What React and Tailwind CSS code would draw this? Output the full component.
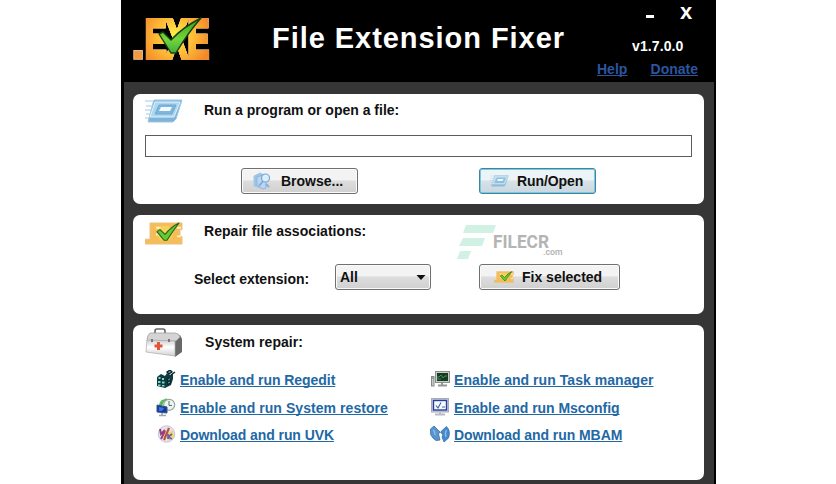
import React from "react";

function Check(props) {
  return (
    <g {...props}>
      <path d="M26 34 L30 32 L38 40 Q50 27 68 18 Q54 34 43 53 L38 53 Z" fill="url(#checkFill)" stroke="#173f0b" strokeWidth="1.4" strokeLinejoin="round" />
    </g>
  );
}

function ExeLogo() {
  return (
    <svg className="block h-[46px] w-[78px] overflow-visible" viewBox="0 0 78 46">
      <defs>
        <radialGradient id="exeFill" gradientUnits="userSpaceOnUse" cx="42" cy="21" r="36">
          <stop offset="0" stopColor="#fff04a" />
          <stop offset="0.5" stopColor="#ffbd35" />
          <stop offset="1" stopColor="#f28a2d" />
        </radialGradient>
        <linearGradient id="checkFill" x1="0" y1="0" x2="0" y2="1">
          <stop offset="0" stopColor="#399a20" />
          <stop offset="0.6" stopColor="#75d53b" />
          <stop offset="1" stopColor="#3fae3d" />
        </linearGradient>
      </defs>
      <rect x="0.8" y="35.5" width="8.6" height="8.8" fill="#f39a3a" stroke="#e9bb90" />
      <text className="[filter:drop-shadow(0_0_0.5px_#f3d3b0)_drop-shadow(0_0_0.3px_#edbd8d)]" x="12" y="42.500" textLength="64" lengthAdjust="spacingAndGlyphs" fontFamily="Liberation Sans, sans-serif" fontWeight="700" fontSize="56" fill="url(#exeFill)" stroke="url(#exeFill)" strokeWidth="4.200">EXE</text>
      <Check transform="translate(0 -15)" />
    </svg>
  );
}

function ExeIcon({ className }) {
  return (
    <svg className={className} viewBox="0 0 38 24" preserveAspectRatio="none">
      <path d="M5 1H37V8H35V15H37V23H0V18H5Z" fill="#f4bd57" stroke="#e8c284" />
      <path d="M11 6H16M11 13H16M32 6H36M32 15H36" stroke="#fff0c9" strokeWidth="2" />
      <circle cx="20" cy="12" r="8" fill="#f7d957" opacity=".7" />
      <path d="M12 10L15 8L20 13Q26 5 34 1Q28 9 22 19L19 19Z" fill="#65c934" stroke="#24631a" strokeWidth="1.1" strokeLinejoin="round" />
    </svg>
  );
}

function RunIcon({ className }) {
  return (
    <svg className={className} viewBox="0 0 38 24" preserveAspectRatio="none">
      <path d="M9 1H37L31 20L28 23H3L8 4Z" fill="#7eb4d8" stroke="#9dc9e3" />
      <path d="M10 3H35L29 18H5Z" fill="#add6ef" stroke="#e1f2fb" />
      <path d="M14 6H31L27 15H10Z" fill="#7fb6de" stroke="#6fa9d2" />
      <path d="M16 8H27L25 12H14Z" fill="#f2faff" />
      <path d="M0 2H8M1 7H7M0 11H6M1 15H5M0 19H4" stroke="#a5c9de" strokeWidth="1" />
    </svg>
  );
}

function BrowseIcon() {
  return (
    <svg className="h-[18px] w-[18px]" viewBox="0 0 18 18">
      <path d="M1 4L7 1L11 3V14L8 16L1 14Z" fill="#9bc3e9" stroke="#a9c8e4" />
      <path d="M4 5L10 3L13 5V16L10 17L4 14Z" fill="#bad5ef" stroke="#8eb7df" />
      <circle cx="12.5" cy="6" r="4" fill="#d9eeff" stroke="#7aa5d5" strokeWidth="1.2" />
      <path d="M10 9L6 14" stroke="#80acd9" strokeWidth="2" />
      <path d="M13 12L16 15" stroke="#87afd8" strokeWidth="2" />
    </svg>
  );
}

function KitIcon() {
  return (
    <svg className="h-[30px] w-[38px]" viewBox="0 0 38 30">
      <defs>
        <linearGradient id="kit" x1="0" y1="0" x2="0" y2="1">
          <stop stopColor="#cfcfcf" /><stop offset=".45" stopColor="#fff" /><stop offset="1" stopColor="#cfcfcf" />
        </linearGradient>
      </defs>
      <path d="M10 6V3Q10 1 12 1H18Q20 1 20 3V6" fill="none" stroke="#686868" strokeWidth="1.6" />
      <path d="M28 8L35 7L37 11V24L30 29Z" fill="#686868" />
      <path d="M5 5H30Q34 5 35 9L31 13H2Q2 7 5 5Z" fill="#d4d4d4" stroke="#999" strokeWidth=".7" />
      <path d="M2 12L30 13V28L1 24Z" fill="url(#kit)" stroke="#aaa" strokeWidth=".7" />
      <path d="M7 11V14M24 11V14" stroke="#777" strokeWidth="2" />
      <path d="M13.5 14V22M9.5 18H17.5" stroke="#e0563b" strokeWidth="3" />
    </svg>
  );
}

function RegeditIcon() {
  return (
    <svg className="h-[19px] w-[20px]" viewBox="0 0 20 19">
      <path d="M1 7L5 4L9 6L11 3L14 5L17 4V9L15 15L9 18L1 16Z" fill="#103b3e" />
      <path d="M2.500 7h2v2h-2zM6 8h2v2H6zM2 11h2.500v2H2zM6 11.500h2.500v2H6zM2 14.500h2.500v1.500H2zM6 15h2.500v1.500H6z" fill="#78d8d2" />
      <path d="M11 2L14 0L16 2L13 4ZM15 5L19 2M12 8V15M14 9L14 14" fill="#4fa9aa" stroke="#071f25" strokeWidth="1.3" />
      <path d="M12 10L14 9M12 13L14 12" stroke="#4fb5b8" />
    </svg>
  );
}

function RestoreIcon() {
  return (
    <svg className="h-[19px] w-[20px]" viewBox="0 0 20 19">
      <path d="M3 7Q4 1 10 1L9 0L14 2L11 5L10 3Q7 3 6 9Z" fill="#55b85a" />
      <circle cx="13.2" cy="6.8" r="5.5" fill="#edf3ee" stroke="#94a69e" strokeWidth="1.2" />
      <path d="M13 3V7.500H16" fill="none" stroke="#536f77" />
      <path d="M1 7L11 9V15L1 14Z" fill="#1739a7" stroke="#3b527e" />
      <path d="M3 9L8 10L6 13H3Z" fill="#3878e2" />
      <path d="M6 15V17M3 17.5H10" stroke="#9ba6ae" strokeWidth="1.7" />
    </svg>
  );
}

function UvkIcon() {
  return (
    <svg className="h-[19px] w-[20px]" viewBox="0 0 20 19">
      <circle cx="10.5" cy="9" r="8.200" fill="#e5e2f0" stroke="#c8c4d9" />
      <path d="M12 8L17 5L18 12L12 16Z" fill="#efd477" />
      <path d="M4 4L5 9L9 5M9 6L5 14" fill="none" stroke="#96417d" strokeWidth="2" />
      <path d="M13 3L8 15" stroke="#c2532a" strokeWidth="2.2" />
      <path d="M12 9V14M12 12L16 9M12 12L16 14" fill="none" stroke="#6265a2" strokeWidth="1.7" />
    </svg>
  );
}

function TaskIcon() {
  return (
    <svg className="h-[19px] w-[20px]" viewBox="0 0 20 19">
      <rect x="1.500" y="6.500" width="2.500" height="9.500" fill="#c7ccca" stroke="#838a87" />
      <path d="M2 8H4" stroke="#777" />
      <rect x="5.5" y="1.500" width="14" height="11" fill="#c9cec8" stroke="#899089" />
      <rect x="7" y="3" width="11" height="8" fill="#153b24" />
      <path d="M7 7H9L11 5L13 8L15 6H17M7 9H11" fill="none" stroke="#4b8c51" />
      <path d="M12 13V15M8 15.5H17" stroke="#929896" strokeWidth="2" />
    </svg>
  );
}

function ConfigIcon() {
  return (
    <svg className="h-[19px] w-[20px]" viewBox="0 0 20 19">
      <rect x="1.5" y="0.500" width="17" height="13.500" fill="#c9ccd7" stroke="#a5aabd" />
      <rect x="3.5" y="2.500" width="13" height="9.5" fill="#f7faff" stroke="#293e99" strokeWidth="1.4" />
      <path d="M6 7.500L8 10L11 4.500M12 9H15" fill="none" stroke="#3e68ae" strokeWidth="1.2" />
      <path d="M10 14.500V17M5 16.500H15" stroke="#b8bbc4" strokeWidth="2" />
    </svg>
  );
}

function MbamIcon() {
  return (
    <svg className="h-[19px] w-[20px]" viewBox="0 0 20 19">
      <path d="M4 1L10 7L8.500 9L10 15L6 15.500Q-1 11 0.500 4Z" fill="#5794d0" stroke="#376f9f" strokeWidth=".8" />
      <path d="M16.500 1.500Q21 6 18.500 13L14 17L12 12L13 10L10.500 7Z" fill="#438ad0" stroke="#376f9f" strokeWidth=".8" />
      <path d="M3 5Q5 6 5 10M16.500 5Q14.500 8 16 12" fill="none" stroke="#8dc1ea" strokeWidth="1.200" />
    </svg>
  );
}

function FileCr() {
  return (
    <svg className="h-[36px] w-[108px]" viewBox="0 0 108 36">
      <path d="M9 0H39L36 8H6ZM6 13H28L25 21H2ZM3 26H14L11 34H0Z" fill="#d0f1e4" />
      <text x="36" y="23" textLength="56" lengthAdjust="spacingAndGlyphs" fontFamily="Roboto, sans-serif" fontWeight="700" fontSize="18" fill="#b4b4b4">FILECR</text>
      <text x="86" y="30" textLength="19.500" lengthAdjust="spacingAndGlyphs" fontFamily="Roboto, sans-serif" fontWeight="600" fontSize="8.500" fill="#b4b4b4">.com</text>
    </svg>
  );
}

const leftLinks = [
  [RegeditIcon, "Enable and run Regedit", "tracking-[-0.05px]"],
  [RestoreIcon, "Enable and run System restore", "tracking-[0.06px]"],
  [UvkIcon, "Download and run UVK", "tracking-[-0.08px]"],
];
const rightLinks = [
  [TaskIcon, "Enable and run Task manager", "tracking-[0.05px]"],
  [ConfigIcon, "Enable and run Msconfig", "tracking-[-0.04px]"],
  [MbamIcon, "Download and run MBAM", "tracking-[-0.06px]"],
];

function Links({ items }) {
  return (
    <ul className="flex flex-col">
      {items.map(([Icon, label, spacing]) => (
        <li key={label} className="flex h-[27.5px] items-center">
          <Icon />
          <a className={"ml-1 whitespace-nowrap pt-px text-[#2268a5] underline decoration-1 underline-offset-[1px] [text-decoration-skip-ink:none] " + spacing}>{label}</a>
        </li>
      ))}
    </ul>
  );
}

const button = "flex h-[26px] items-center rounded-[3px] border border-[#707070] bg-linear-to-b from-[#f3f3f3] from-45% via-[#dddddd] via-50% to-[#d0d0d0] shadow-[inset_0_0_0_1px_#fafafa]";

export default function App() {
  return (
    <div className="h-[484px] w-[836px] overflow-hidden bg-white pl-[121px] font-['Liberation_Sans',Arial,sans-serif] text-[14px] leading-4 font-bold text-[#111]">
      <main className="flex h-full w-[595px] flex-col border-l-[3px] border-r-2 border-black bg-[#363636]">
        <header className="flex h-[82px] shrink-0 bg-black text-white">
          <div className="ml-[9px] mt-[15px] w-[78px]"><ExeLogo /></div>
          <h1 className="ml-[61px] mt-[21px] w-[300px] text-[29px] leading-[34px] tracking-[0.95px] whitespace-nowrap">File Extension Fixer</h1>
          <div className="ml-[24px] flex w-[104px] flex-col">
            <div className="flex h-[26px] pl-[50px] pt-1">
              <span className="mt-[11px] h-[3px] w-2 bg-white" />
              <span className="ml-[26px] text-[22px] leading-4">x</span>
            </div>
            <span className="mt-[12px] ml-9 tracking-[0.1px]">v1.7.0.0</span>
            <nav className="mt-[7px] flex justify-between text-[#2b559f] underline underline-offset-[1px] [text-decoration-skip-ink:none]">
              <a className="ml-px">Help</a><a className="mr-[2px]">Donate</a>
            </nav>
          </div>
        </header>

        <section className="mx-[9px] mt-3 h-[110px] w-[571px] shrink-0 rounded-[7px] bg-white px-3 pt-[5px]">
          <div className="flex h-[36px]">
            <RunIcon className="h-6 w-[38px]" />
            <h2 className="ml-[21px] mt-[3px]">Run a program or open a file:</h2>
          </div>
          <div className="h-[22px] w-[547px] border border-[#5c5c5c] bg-white" />
          <div className="mt-[11px] flex pl-24">
            <button className={button + " w-[117px] pl-[11px]"}>
              <BrowseIcon /><span className="ml-[10px]">Browse...</span>
            </button>
            <button className="ml-[121px] flex h-[26px] w-[117px] items-center rounded-[3px] border border-[#44849b] bg-linear-to-b from-[#edf4f7] from-45% via-[#d8e2e7] via-50% to-[#c9d7df] pl-[10px] shadow-[inset_0_0_0_1px_#75cbe0]">
              <RunIcon className="h-3 w-[19px] opacity-80" /><span className="ml-2 tracking-[-0.1px]">Run/Open</span>
            </button>
          </div>
        </section>

        <section className="mx-[9px] mt-[11px] h-[99px] w-[571px] shrink-0 rounded-[7px] bg-white px-3 pt-[7px]">
          <div className="flex h-[42px]">
            <ExeIcon className="h-[23px] w-[38px]" />
            <h2 className="ml-[21px] mt-[1px] w-[253px] tracking-[0.05px]">Repair file associations:</h2>
            <div className="mt-[3px]"><FileCr /></div>
          </div>
          <div className="flex">
            <span className="ml-[49px] mt-[7px] w-[141px]">Select extension:</span>
            <div className={button + " w-[96px] justify-between px-1"}>
              <span>All</span>
              <svg className="h-[5px] w-[10px]" viewBox="0 0 10 5"><path d="M0.500 0H9.500L5 5Z" fill="#111" /></svg>
            </div>
            <button className={button + " ml-[48px] w-[141px] pl-[14px]"}>
              <ExeIcon className="h-3 w-[20px]" /><span className="ml-2">Fix selected</span>
            </button>
          </div>
        </section>

        <section className="mx-[9px] mt-[11px] h-[155px] w-[571px] shrink-0 rounded-[7px] bg-white px-3 pt-[3px]">
          <div className="flex h-[38px]">
            <KitIcon /><h2 className="ml-[22px] mt-[6px] tracking-[0.05px]">System repair:</h2>
          </div>
          <div className="flex pl-[11px]">
            <div className="w-[274px]"><Links items={leftLinks} /></div>
            <Links items={rightLinks} />
          </div>
        </section>
      </main>
    </div>
  );
}
